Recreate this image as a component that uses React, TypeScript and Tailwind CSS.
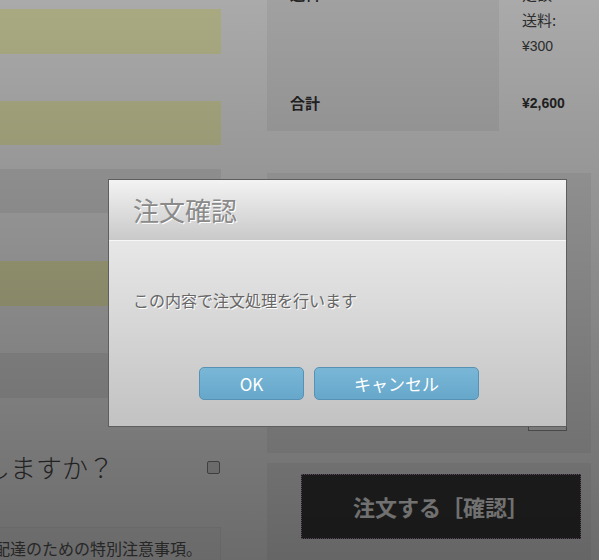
import React from "react";

export default function App() {
  const font = { fontFamily: '"Noto Sans CJK JP", "Noto Sans", sans-serif' };
  return (
    <div
      className="relative w-[599px] h-[560px] overflow-hidden bg-white"
      style={font}
    >
      <div className="flex">
        {/* left column */}
        <div className="w-[221px] flex flex-col pt-[9px]">
          <div className="h-[45px] bg-[#ffffc3]" />
          <div className="h-[47px]" />
          <div className="h-[44px] bg-[#ffffc3]" />
          <div className="h-[24px]" />
          <div className="h-[44px] bg-[#efefef]" />
          <div className="h-[48px]" />
          <div className="h-[45px] bg-[#ffffc3]" />
          <div className="h-[47px]" />
          <div className="h-[45px] bg-[#efefef]" />
          <div className="h-[49px]" />
          <div className="h-[40px] flex items-center justify-between">
            <span className="-ml-[16px] text-[26px] leading-[40px] text-[#4a4a4a] font-light whitespace-nowrap">
              しますか？
            </span>
            <span className="w-[13px] h-[13px] rounded-[2px] border border-[#888] bg-[#e8e8e8] mr-[1px]" />
          </div>
          <div className="h-[40px]" />
          <div className="h-[60px] border-t border-r border-[#f0f0f0] bg-[#fbfbfb] overflow-hidden">
            <div className="-ml-[6px] pt-[10px] text-[16px] leading-[20px] text-[#5a5a5a] whitespace-nowrap">
              配達のための特別注意事項。
            </div>
          </div>
        </div>

        {/* right column */}
        <div className="ml-[46px] w-[324px] flex flex-col -mt-[27px]">
          <div className="flex">
            <div className="w-[232px] bg-[#f1f1f1] flex flex-col">
              <div className="pl-[23px] pt-[8px] pb-[15px] text-[15px] leading-[26px] font-bold text-[#333]">
                <div>送料</div>
                <div>&nbsp;</div>
                <div>&nbsp;</div>
              </div>
              <div className="pl-[23px] pt-[16px] pb-[15px] text-[15px] leading-[26px] font-bold text-[#333]">
                合計
              </div>
            </div>
            <div className="flex flex-col text-[#444]">
              <div className="pl-[23px] pt-[8px] pb-[15px] leading-[26px]">
                <div className="text-[15px]">定額</div>
                <div className="text-[15px]">送料:</div>
                <div className="text-[14px]" style={{ fontFamily: '"Liberation Sans", sans-serif' }}>¥300</div>
              </div>
              <div
                className="pl-[23px] pt-[16px] pb-[15px] text-[14px] leading-[26px] font-bold text-[#333]"
                style={{ fontFamily: '"Liberation Sans", sans-serif' }}
              >
                ¥2,600
              </div>
            </div>
          </div>
          <div className="h-[42px]" />
          <div className="h-[280px] bg-[#f2f2f2] flex flex-col justify-end pb-[22px]">
            <div className="ml-[261px] w-[39px] h-[23px] border border-[#9a9a9a] bg-white" />
          </div>
          <div className="h-[10px]" />
          <div className="h-[120px] bg-[#f2f2f2] pt-[11px] pl-[34px]">
            <div className="w-[280px] h-[65px] bg-[#3a3a3a] border border-dotted border-[#c8a0c8] flex items-center justify-center text-white text-[22px] font-bold">
              注文する［確認］
            </div>
          </div>
        </div>
      </div>

      {/* overlay */}
      <div className="absolute inset-0 bg-gradient-to-b from-[rgba(0,0,0,0.335)] to-[rgba(0,0,0,0.58)]" />

      {/* dialog */}
      <div className="absolute left-[108px] top-[179px] w-[459px] h-[248px] border border-[#5e5e5e] flex flex-col overflow-hidden">
        <div className="h-[61px] shrink-0 bg-gradient-to-b from-[#f3f3f3] to-[#c9c9c9] border-b border-[#f7f7f7] flex items-center pl-[24px]">
          <span className="text-[26px] leading-none text-[#8a8a8a] [text-shadow:1px_1px_0_#ffffff]">
            注文確認
          </span>
        </div>
        <div className="flex-1 bg-gradient-to-b from-[#e7e7e7] to-[#c2c2c2] pl-[24px] pt-[47px]">
          <div className="text-[16px] leading-[24px] text-[#666] [text-shadow:1px_1px_0_#ffffff]">
            この内容で注文処理を行います
          </div>
          <div className="flex gap-[10px] mt-[55px] ml-[66px]">
            <button className="w-[105px] h-[33px] rounded-[5px] border border-[#5792b5] bg-gradient-to-b from-[#7ab7d7] to-[#66a7ca] text-white text-[17px] flex items-center justify-center">
              OK
            </button>
            <button className="w-[165px] h-[33px] rounded-[5px] border border-[#5792b5] bg-gradient-to-b from-[#7ab7d7] to-[#66a7ca] text-white text-[17px] flex items-center justify-center">
              キャンセル
            </button>
          </div>
        </div>
      </div>
    </div>
  );
}
